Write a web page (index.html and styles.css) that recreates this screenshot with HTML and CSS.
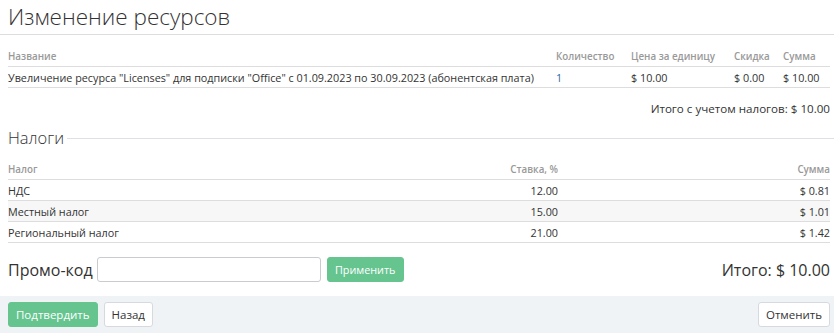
FILE: index.html
```html
<!DOCTYPE html>
<html lang="ru">
<head>
<meta charset="utf-8">
<link rel="stylesheet" href="styles.css">
</head>
<body>
<div class="page">
  <h1 class="title">Изменение ресурсов</h1>
  <table class="grid items">
    <thead>
      <tr>
        <th class="c-name">Название</th>
        <th class="c-qty">Количество</th>
        <th class="c-price">Цена за единицу</th>
        <th class="c-disc">Скидка</th>
        <th class="c-sum">Сумма</th>
      </tr>
    </thead>
    <tbody>
      <tr>
        <td>Увеличение ресурса "Licenses" для подписки "Office" с 01.09.2023 по 30.09.2023 (абонентская плата)</td>
        <td class="link">1</td>
        <td>$ 10.00</td>
        <td>$ 0.00</td>
        <td>$ 10.00</td>
      </tr>
    </tbody>
  </table>
  <div class="subtotal">Итого с учетом налогов: $ 10.00</div>

  <div class="legend"><span>Налоги</span></div>
  <table class="grid taxes">
    <thead>
      <tr>
        <th class="t-name">Налог</th>
        <th class="t-rate num">Ставка, %</th>
        <th class="num">Сумма</th>
      </tr>
    </thead>
    <tbody>
      <tr><td>НДС</td><td class="num">12.00</td><td class="num">$ 0.81</td></tr>
      <tr class="alt"><td>Местный налог</td><td class="num">15.00</td><td class="num">$ 1.01</td></tr>
      <tr><td>Региональный налог</td><td class="num">21.00</td><td class="num">$ 1.42</td></tr>
    </tbody>
  </table>

  <div class="promo">
    <label class="promo-label">Промо-код</label>
    <input class="promo-input" type="text">
    <button class="btn btn-green btn-apply">Применить</button>
    <div class="total">Итого: $ 10.00</div>
  </div>
</div>
<div class="footer">
  <div class="footer-left">
    <button class="btn btn-green">Подтвердить</button>
    <button class="btn btn-white">Назад</button>
  </div>
  <button class="btn btn-white">Отменить</button>
</div>
</body>
</html>
```

FILE: styles.css
```css
html, body {
  margin: 0;
  padding: 0;
  background: #fff;
}
body {
  font-family: "Open Sans", "Noto Sans", sans-serif;
  color: #333;
  font-size: 10.8px;
  width: 834px;
  height: 333px;
  overflow: hidden;
}
.page {
  padding: 0 4px 0 8px;
}
.title {
  margin: 0 -4px 0 -8px;
  padding: 1px 0 1px 8px;
  font-size: 22.5px;
  font-weight: 300;
  line-height: 32px;
  color: #333;
  border-bottom: 1px solid #ddd;
}
.grid {
  width: 100%;
  border-collapse: collapse;
}
.grid th {
  font-size: 9.8px;
  font-weight: 600;
  color: #999;
  text-align: left;
  padding: 0;
  height: 21px;
  vertical-align: middle;
  border-bottom: 1px solid #ddd;
}
.grid td {
  padding: 0;
  height: 20px;
  vertical-align: middle;
  border-bottom: 1px solid #ddd;
  color: #333;
  white-space: nowrap;
}
.items {
  margin-top: 11px;
}
.items th { height: 20px; }
.items .c-name { width: 548px; }
.items .c-qty { width: 75px; }
.items .c-price { width: 103px; }
.items .c-disc { width: 49px; }
.link { color: #2a6aa0 !important; }
.subtotal {
  text-align: right;
  font-size: 11.6px;
  line-height: 16px;
  margin-top: 13px;
}
.legend {
  display: flex;
  align-items: center;
  margin-top: 10px;
  margin-right: -4px;
  font-size: 16.5px;
  font-weight: 300;
  line-height: 22px;
}
.legend::after {
  content: "";
  flex: 1;
  height: 1px;
  background: #dde1e6;
  margin-left: 3px;
  margin-top: 1px;
}
.taxes {
  margin-top: 11px;
}
.taxes th { height: 19px; }
.taxes .t-name { width: 250px; }
.taxes .t-rate { width: 300px; }
.num { text-align: right !important; }
.taxes tr.alt td { background: #f7f7f7; }
.promo {
  display: flex;
  align-items: center;
  margin-top: 14px;
  height: 25px;
}
.promo-label {
  font-size: 16px;
  font-weight: 400;
  margin-right: 4px;
}
.promo-input {
  width: 224px;
  height: 25px;
  box-sizing: border-box;
  border: 1px solid #c8ccd0;
  border-radius: 3px;
  margin: 0 6px 0 0;
  padding: 0;
}
.total {
  margin-left: auto;
  font-size: 16px;
}
.btn {
  font-family: "Open Sans", "Noto Sans", sans-serif;
  font-size: 11.5px;
  height: 25px;
  padding: 0 7px;
  border-radius: 3px;
  cursor: pointer;
  line-height: 23px;
}
.btn-green {
  background: #66c48f;
  border: 1px solid #66c48f;
  color: #fff;
}
.btn-apply {
  width: 77px;
  font-size: 10.8px;
  padding: 0;
}
.btn-white {
  background: #fff;
  border: 1px solid #d6dade;
  color: #333;
}
.footer {
  margin-top: 14px;
  background: #eff3f6;
  height: 37px;
  display: flex;
  align-items: center;
  justify-content: space-between;
  padding: 0 4px 0 8px;
}
.footer-left {
  display: flex;
  gap: 6px;
}
```
